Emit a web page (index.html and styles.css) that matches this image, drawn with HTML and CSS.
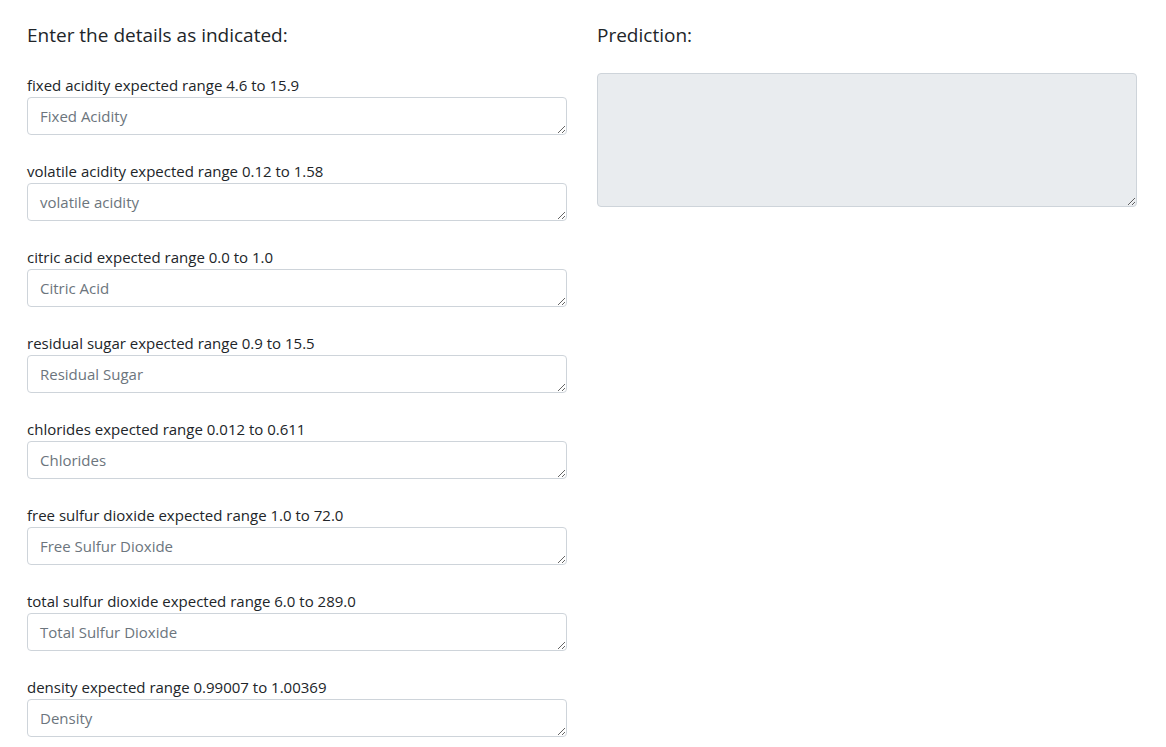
FILE: index.html
```html
<!DOCTYPE html>
<html lang="en">
<head>
<meta charset="utf-8">
<title>Wine Quality Prediction</title>
<link rel="stylesheet" href="styles.css">
</head>
<body>
<div class="container">
  <form class="row">
    <div class="col">
      <h5 class="title">Enter the details as indicated:</h5>
      <div class="group">
        <label class="label" for="fa">fixed acidity expected range 4.6 to 15.9</label>
        <textarea class="control" id="fa" placeholder="Fixed Acidity"></textarea>
      </div>
      <div class="group">
        <label class="label" for="va">volatile acidity expected range 0.12 to 1.58</label>
        <textarea class="control" id="va" placeholder="volatile acidity"></textarea>
      </div>
      <div class="group">
        <label class="label" for="ca">citric acid expected range 0.0 to 1.0</label>
        <textarea class="control" id="ca" placeholder="Citric Acid"></textarea>
      </div>
      <div class="group">
        <label class="label" for="rs">residual sugar expected range 0.9 to 15.5</label>
        <textarea class="control" id="rs" placeholder="Residual Sugar"></textarea>
      </div>
      <div class="group">
        <label class="label" for="ch">chlorides expected range 0.012 to 0.611</label>
        <textarea class="control" id="ch" placeholder="Chlorides"></textarea>
      </div>
      <div class="group">
        <label class="label" for="fsd">free sulfur dioxide expected range 1.0 to 72.0</label>
        <textarea class="control" id="fsd" placeholder="Free Sulfur Dioxide"></textarea>
      </div>
      <div class="group">
        <label class="label" for="tsd">total sulfur dioxide expected range 6.0 to 289.0</label>
        <textarea class="control" id="tsd" placeholder="Total Sulfur Dioxide"></textarea>
      </div>
      <div class="group">
        <label class="label" for="de">density expected range 0.99007 to 1.00369</label>
        <textarea class="control" id="de" placeholder="Density"></textarea>
      </div>
    </div>
    <div class="col">
      <h5 class="title">Prediction:</h5>
      <textarea class="control output" readonly></textarea>
    </div>
  </form>
</div>
</body>
</html>
```
FILE: styles.css
```css
* { box-sizing: border-box; }
html, body { margin: 0; padding: 0; background: #fff; }
body {
  font-family: "Open Sans", "Noto Sans", sans-serif;
  font-size: 15px;
  line-height: 1.5;
  color: #212529;
}
.container {
  max-width: 1140px;
  margin: 0 auto;
  padding: 23px 16px 0 14px;
}
.row {
  display: grid;
  grid-template-columns: 1fr 1fr;
  column-gap: 30px;
}
.col { display: flex; flex-direction: column; }
.title {
  margin: 0 0 26px;
  font-size: 19px;
  font-weight: 400;
  line-height: 24px;
}
.group {
  display: flex;
  flex-direction: column;
  margin-bottom: 24px;
}
.label {
  display: block;
  font-size: 15px;
  line-height: 24px;
}
.control {
  display: block;
  width: 100%;
  height: 38px;
  padding: 6px 12px;
  font-family: inherit;
  font-size: 15px;
  line-height: 24px;
  color: #495057;
  background: #fff;
  border: 1px solid #ced4da;
  border-radius: 4px;
  overflow: hidden;
  resize: vertical;
}
.control::placeholder { color: #6c757d; opacity: 1; }
.output {
  height: 134px;
  background: #e9ecef;
}
```
